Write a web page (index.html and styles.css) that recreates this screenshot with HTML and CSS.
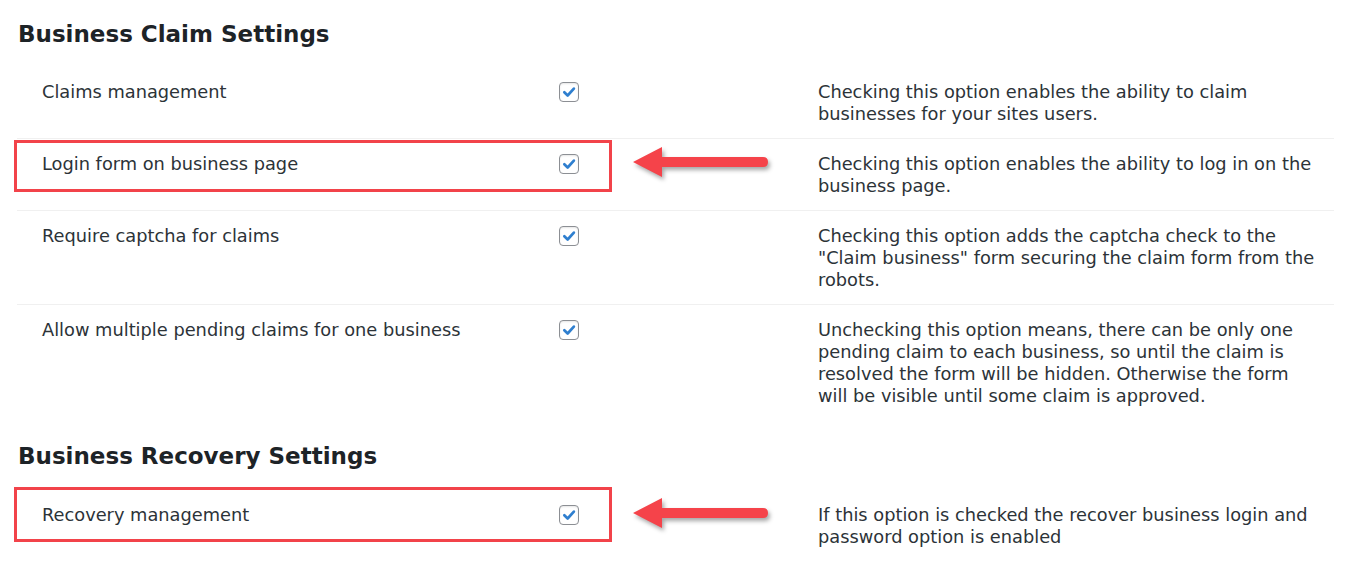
FILE: index.html
```html
<!DOCTYPE html>
<html lang="en">
<head>
  <meta charset="UTF-8">
  <title>Business Claim Settings</title>
  <link rel="stylesheet" href="styles.css">
</head>
<body>

  <div class="page">
    <h2 class="section-title">Business Claim Settings</h2>
    <div class="settings">
      <div class="row">
        <div class="label">Claims management</div>
        <div class="control"><span class="checkbox"><svg viewBox="0 0 20 20"><path d="M4.8 10.2 L8.5 13.9 L15.4 6.2"/></svg></span></div>
        <div class="desc">Checking this option enables the ability to claim businesses for your sites users.</div>
      </div>
      <div class="row marked">
        <div class="label">Login form on business page</div>
        <div class="control"><span class="checkbox"><svg viewBox="0 0 20 20"><path d="M4.8 10.2 L8.5 13.9 L15.4 6.2"/></svg></span></div>
        <div class="desc">Checking this option enables the ability to log in on the business page.</div>
        <svg class="arrow" viewBox="0 0 150 44"><path d="M2 20 L31 5 L31 15 L132 15 Q137 15 137 20 Q137 25 132 25 L31 25 L31 35 Z"/></svg>
      </div>
      <div class="row">
        <div class="label">Require captcha for claims</div>
        <div class="control"><span class="checkbox"><svg viewBox="0 0 20 20"><path d="M4.8 10.2 L8.5 13.9 L15.4 6.2"/></svg></span></div>
        <div class="desc">Checking this option adds the captcha check to the "Claim business" form securing the claim form from the robots.</div>
      </div>
      <div class="row">
        <div class="label">Allow multiple pending claims for one business</div>
        <div class="control"><span class="checkbox"><svg viewBox="0 0 20 20"><path d="M4.8 10.2 L8.5 13.9 L15.4 6.2"/></svg></span></div>
        <div class="desc">Unchecking this option means, there can be only one pending claim to each business, so until the claim is resolved the form will be hidden. Otherwise the form will be visible until some claim is approved.</div>
      </div>
    </div>

    <h2 class="section-title second">Business Recovery Settings</h2>
    <div class="settings">
      <div class="row marked marked-tall">
        <div class="label">Recovery management</div>
        <div class="control"><span class="checkbox"><svg viewBox="0 0 20 20"><path d="M4.8 10.2 L8.5 13.9 L15.4 6.2"/></svg></span></div>
        <div class="desc">If this option is checked the recover business login and password option is enabled</div>
        <svg class="arrow" viewBox="0 0 150 44"><path d="M2 20 L31 5 L31 15 L132 15 Q137 15 137 20 Q137 25 132 25 L31 25 L31 35 Z"/></svg>
      </div>
    </div>
  </div>

</body>
</html>
```

FILE: styles.css
```css
body {
  font-family: "DejaVu Sans", Verdana, sans-serif;
  margin: 0;
  padding: 0;
  background: #fff;
  color: #2c3338;
}

.page {
  padding: 0 17px;
}

.section-title {
  margin: 0 0 18px;
  padding: 19px 0 0 1px;
  font-size: 23px;
  line-height: 30px;
  font-weight: bold;
  color: #1d2327;
}

.section-title.second {
  margin-top: 21px;
  padding-top: 0;
  margin-bottom: 19px;
}

.row {
  position: relative;
  display: grid;
  grid-template-columns: 517px 259px 1fr;
  padding: 14px 13px 13px 25px;
  border-bottom: 1px solid #f0f0f0;
  font-size: 17.8px;
  line-height: 22px;
}

.row:last-child {
  border-bottom: none;
}

.checkbox {
  display: block;
  width: 18px;
  height: 18px;
  margin-top: 1px;
  border: 1px solid #8c8f94;
  border-radius: 4px;
  box-shadow: inset 0 1px 2px rgba(0,0,0,0.1);
}

.checkbox svg {
  display: block;
  width: 18px;
  height: 18px;
}

.checkbox path {
  fill: none;
  stroke: #2f7fcf;
  stroke-width: 3;
  stroke-linecap: round;
  stroke-linejoin: round;
}

/* annotation: red box + arrow */
.marked::before {
  content: "";
  position: absolute;
  left: -3px;
  top: 1px;
  width: 592px;
  height: 46px;
  border: 3px solid #f2434a;
}

.marked-tall::before {
  top: -3px;
  height: 49px;
}

.arrow {
  position: absolute;
  left: 614px;
  top: 3px;
  width: 150px;
  height: 44px;
  overflow: visible;
}

.arrow path {
  fill: #f5434a;
  filter: drop-shadow(2px 3px 2px rgba(0,0,0,0.35));
}
```
